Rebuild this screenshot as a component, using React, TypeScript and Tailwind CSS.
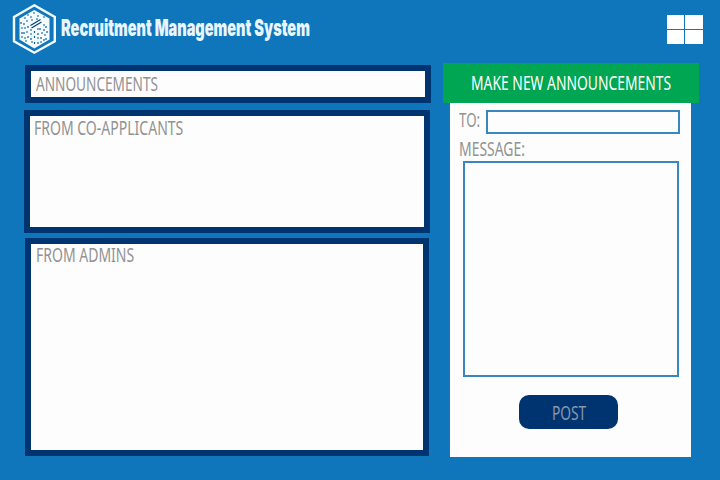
import { useLayoutEffect, useRef, useState } from "react";

type FitProps = { text: string; width: number; className?: string };

/* Condensed lettering: the glyphs are narrowed to the given width. */
function FitText({ text, width, className = "" }: FitProps) {
  const ref = useRef<HTMLSpanElement>(null);
  const [scale, setScale] = useState(0.8);
  useLayoutEffect(() => {
    if (ref.current) setScale(width / ref.current.offsetWidth);
  }, [width, text]);
  return (
    <span className={`block whitespace-nowrap ${className}`} style={{ width }}>
      <span ref={ref} className="inline-block origin-left" style={{ transform: `scaleX(${scale})` }}>
        {text}
      </span>
    </span>
  );
}

const label = "text-[19px] leading-[22px] text-[#929292]";

function Logo() {
  return (
    <svg width="44" height="52" viewBox="12 3 44 52" fill="none">
      <path d="M34.3 5.3 54.8 17v24.2L34.3 52.7 14 41.2V17Z" stroke="#f4fbff" strokeWidth="2.4" />
      <path d="M34.3 10 49.5 18.5v21L34.3 48.5 19.5 39.5v-21Z" fill="#f4fbff" />
      <g stroke="#0b5f9e" strokeWidth="1.2">
        <path d="m30.5 25.5 10-6M31.5 28l10-6" stroke="#083f70" />
        <path d="M27 15h2m4-2h2m2 3h2m-15 2h2m4-1h2m4 2h2m5-2h2m-19 4h2m3-1h2" />
        <path d="M21 22v2m0 4h2m-1 4v2m-1 3h2m1-14v2m0 3h2m-2 4v2m0 4h2m2-12v2m-2 4h2m0 4v2m-3 3h2m3-11h2m-2 4h2m-1 4v2m0 2h2" />
        <path d="M34.5 31v2m0 3v2m0 4v2M37 29h2m-1 4v2m-1 3h2m-1 4v2m2-16v2m1 3h2m-2 4v2m-1 3h2m1-17h2m-1 4v2m0 4h2m-2 4v2m2-15v2m1 3v2m-1 5v2" />
      </g>
    </svg>
  );
}

export default function App() {
  return (
    <div className="h-[480px] w-[720px] overflow-hidden bg-[#0f76bc] font-['Noto_Sans',sans-serif]">
      <header className="flex h-[63px] items-start justify-between pl-3 pr-[17px]">
        <div className="flex pt-[3px]">
          <Logo />
          <h1 className="pl-[5px] pt-[11px] font-['Inter',sans-serif] text-[23px] font-black leading-[28px] text-[#e8f6ff]">
            <FitText text="Recruitment Management System" width={249} />
          </h1>
        </div>
        <div className="mt-[15px] grid h-[29px] w-9 grid-cols-[17px_18px] grid-rows-2 gap-px">
          <i className="bg-white" />
          <i className="bg-white" />
          <i className="bg-white" />
          <i className="bg-white" />
        </div>
      </header>
      <main className="flex pl-6">
        <div className="w-[419px] pt-[2px]">
          <section className="ml-px h-[38px] w-[406px] border-[6px] border-[#003471] bg-[#fdfdfd] pl-[5px] pt-[2px]">
            <FitText text="ANNOUNCEMENTS" width={122} className={label} />
          </section>
          <section className="mt-[7px] h-[123px] w-[406px] border-[6px] border-[#003471] bg-[#fdfdfd] pl-1 pt-px">
            <FitText text="FROM CO-APPLICANTS" width={149} className={label} />
          </section>
          <section className="ml-px mt-[5px] h-[218px] w-[404px] border-[6px] border-[#003471] bg-[#fdfdfd] pl-[5px]">
            <FitText text="FROM ADMINS" width={98} className={label} />
          </section>
        </div>
        <div className="w-64">
          <div className="flex h-10 justify-center bg-[#00a651] pt-[9px]">
            <FitText text="MAKE NEW ANNOUNCEMENTS" width={200} className="text-[19px] leading-[22px] text-white" />
          </div>
          <div className="ml-[7px] h-[354px] w-[241px] bg-[#fdfdfd] pl-[9px] pt-[6px]">
            <div className="flex">
              <FitText text="TO:" width={21} className={label} />
              <div className="ml-[6px] mt-px h-6 w-[194px] border-2 border-[#3a87bd]" />
            </div>
            <div className="mt-1">
              <FitText text="MESSAGE:" width={66} className={label} />
            </div>
            <div className="ml-1 mt-px h-[216px] w-[216px] border-2 border-[#3a87bd]" />
            <button className="ml-[60px] mt-[18px] flex h-[34px] w-[99px] justify-center rounded-[10px] bg-[#003471] pt-[7px]">
              <FitText text="POST" width={34} className="text-[19px] leading-[22px] text-[#8997aa]" />
            </button>
          </div>
        </div>
      </main>
    </div>
  );
}
